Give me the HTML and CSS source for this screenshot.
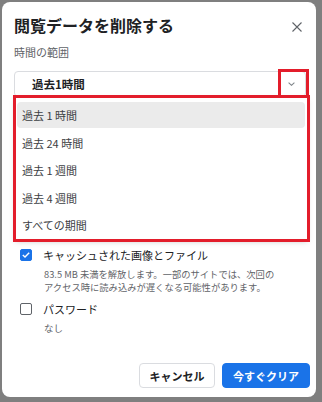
FILE: index.html
```html
<!DOCTYPE html>
<html lang="ja">
<head>
<meta charset="utf-8">
<link rel="stylesheet" href="styles.css">
</head>
<body>
<div class="dialog">
  <div class="header">
    <h1 class="title">閲覧データを削除する</h1>
    <button class="close" aria-label="閉じる">
      <svg width="10" height="10" viewBox="0 0 10 10"><path d="M0.5 0.5L9.5 9.5M9.5 0.5L0.5 9.5" stroke="#5f6368" stroke-width="1.1" fill="none"/></svg>
    </button>
  </div>
  <div class="label">時間の範囲</div>
  <div class="select">
    <span class="select-text">過去1時間</span>
    <svg class="chev" width="7" height="4" viewBox="0 0 7 4"><path d="M0.6 0.6L3.5 3.3L6.4 0.6" stroke="#80868b" stroke-width="1.1" fill="none"/></svg>
  </div>
  <div class="row first">
    <span class="cb checked"><svg width="8" height="6" viewBox="0 0 8 6"><path d="M0.8 3L3 5L7.2 0.8" stroke="#fff" stroke-width="1.4" fill="none"/></svg></span>
    <span class="row-label">キャッシュされた画像とファイル</span>
  </div>
  <div class="desc">83.5 MB 未満を解放します。一部のサイトでは、次回の<br>アクセス時に読み込みが遅くなる可能性があります。</div>
  <div class="row second">
    <span class="cb"></span>
    <span class="row-label">パスワード</span>
  </div>
  <div class="desc small">なし</div>
  <div class="buttons">
    <button class="btn cancel">キャンセル</button>
    <button class="btn primary">今すぐクリア</button>
  </div>
</div>
<div class="popup">
  <div class="item active">過去 1 時間</div>
  <div class="item">過去 24 時間</div>
  <div class="item">過去 1 週間</div>
  <div class="item">過去 4 週間</div>
  <div class="item">すべての期間</div>
</div>
<div class="mark mark-list"></div>
<div class="mark mark-chev"></div>
</body>
</html>
```
FILE: styles.css
```css
html, body {
  margin: 0;
  padding: 0;
}
body {
  width: 322px;
  height: 402px;
  background: #7f7f7f;
  position: relative;
  overflow: hidden;
  font-family: "Noto Sans CJK JP", "Noto Sans", sans-serif;
  color: #202124;
}
.dialog {
  margin: 2px 0 0 2px;
  width: 314px;
  height: 395px;
  box-sizing: border-box;
  padding: 12px 6px 9px 12px;
  background: #fff;
  border-radius: 8px;
  display: flex;
  flex-direction: column;
}
.header {
  display: flex;
  justify-content: space-between;
  align-items: center;
  height: 22px;
}
.title {
  margin: 0;
  font-size: 16px;
  line-height: 22px;
  font-weight: 700;
  color: #202124;
}
.close {
  border: 0;
  background: none;
  padding: 0;
  width: 10px;
  height: 10px;
  margin-right: 8px;
  margin-top: 4px;
  display: flex;
}
.label {
  margin-top: 8px;
  font-size: 11px;
  line-height: 16px;
  color: #5f6368;
}
.select {
  margin-top: 11px;
  width: 292px;
  height: 26px;
  box-sizing: border-box;
  border: 1px solid #dadce0;
  border-radius: 4px;
  display: flex;
  align-items: center;
  justify-content: space-between;
  padding: 0 10px 0 17px;
}
.select-text {
  font-size: 11.5px;
  font-weight: 700;
  color: #202124;
}
.row {
  display: flex;
  align-items: center;
  height: 18px;
  padding-left: 6px;
}
.row.first {
  margin-top: 149px;
}
.row.second {
  margin-top: 6px;
}
.cb {
  width: 12px;
  height: 12px;
  box-sizing: border-box;
  border: 1.5px solid #5f6368;
  border-radius: 2px;
  display: flex;
  align-items: center;
  justify-content: center;
  margin-right: 11px;
}
.cb.checked {
  background: #1a73e8;
  border-color: #1a73e8;
}
.row-label {
  font-size: 11px;
  color: #202124;
}
.desc {
  margin-top: 4px;
  padding-left: 30px;
  font-size: 9.3px;
  line-height: 13px;
  color: #5f6368;
}
.desc.small {
  font-size: 9.5px;
}
.buttons {
  margin-top: auto;
  display: flex;
  justify-content: flex-end;
  gap: 7px;
}
.btn {
  height: 25px;
  box-sizing: border-box;
  border-radius: 4px;
  font-family: "Noto Sans CJK JP", "Noto Sans", sans-serif;
  font-size: 11px;
  font-weight: 700;
  padding: 0;
  white-space: nowrap;
  display: flex;
  align-items: center;
  justify-content: center;
}
.cancel {
  width: 76px;
  background: #fff;
  border: 1px solid #dadce0;
  color: #202124;
}
.primary {
  width: 88px;
  background: #1a73e8;
  border: 1px solid #1a73e8;
  color: #fff;
}
.popup {
  position: absolute;
  left: 16px;
  top: 98px;
  width: 291px;
  height: 141px;
  box-sizing: border-box;
  background: #fff;
  padding: 4px 2px 0 1px;
  box-shadow: 0 2px 6px rgba(0, 0, 0, 0.25);
}
.item {
  height: 27.3px;
  display: flex;
  align-items: center;
  padding-left: 5px;
  font-size: 11px;
  color: #3c4043;
  border-radius: 4px;
}
.item.active {
  background: #ebebeb;
  height: 26px;
  margin-bottom: 1.3px;
}
.mark {
  position: absolute;
  border: 3px solid #e31d2b;
  box-sizing: border-box;
}
.mark-list {
  left: 13px;
  top: 95px;
  width: 297px;
  height: 147px;
}
.mark-chev {
  left: 278px;
  top: 69px;
  width: 31px;
  height: 29px;
}
```
